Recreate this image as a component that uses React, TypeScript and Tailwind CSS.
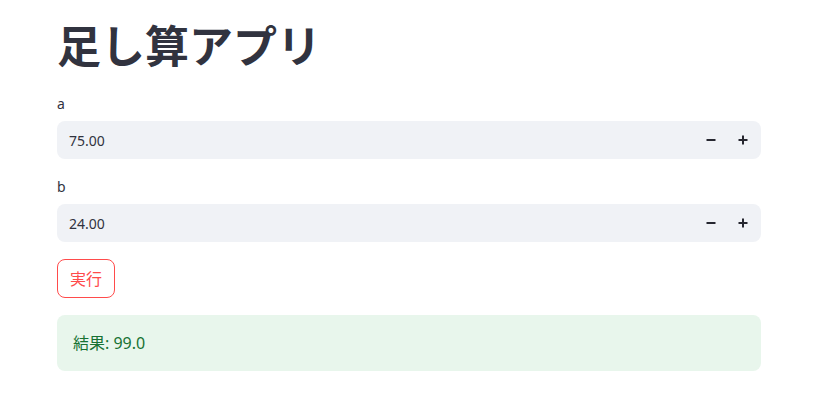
import React from 'react';

function Stepper({ label, value }: { label: string; value: string }) {
  return (
    <div>
      <div className="text-[14px] leading-[20px] text-[#31333f]">{label}</div>
      <div className="mt-[7px] flex h-[38px] items-center rounded-[8px] bg-[#f0f2f6] pl-[12px] pr-[13px]">
        <span className="flex-1 text-[14px] text-[#31333f]">{value}</span>
        <svg width="10" height="10" viewBox="0 0 10 10" className="mr-[22px]">
          <rect x="0.5" y="4" width="9" height="2" fill="#262730" />
        </svg>
        <svg width="10" height="10" viewBox="0 0 10 10">
          <rect x="0.5" y="4" width="9" height="2" fill="#262730" />
          <rect x="4" y="0.5" width="2" height="9" fill="#262730" />
        </svg>
      </div>
    </div>
  );
}

export default function App() {
  return (
    <div
      className="min-h-screen bg-white pl-[57px] pr-[54px] pt-[19px] text-[#31333f]"
      style={{ fontFamily: '"Noto Sans", "Noto Sans CJK JP", sans-serif' }}
    >
      <h1 className="text-[44px] font-bold leading-[54px] text-[#31333f]">足し算アプリ</h1>
      <div className="mt-[21px] flex flex-col gap-[18px]">
        <Stepper label="a" value="75.00" />
        <Stepper label="b" value="24.00" />
      </div>
      <button className="mt-[17px] h-[39px] rounded-[8px] border border-[#ff4b4b] bg-white px-[12px] text-[16px] text-[#ff4b4b]">
        実行
      </button>
      <div className="mt-[17px] flex h-[56px] items-center rounded-[8px] bg-[#e8f6ec] px-[16px] text-[16px] text-[#177233]">
        結果: 99.0
      </div>
    </div>
  );
}
